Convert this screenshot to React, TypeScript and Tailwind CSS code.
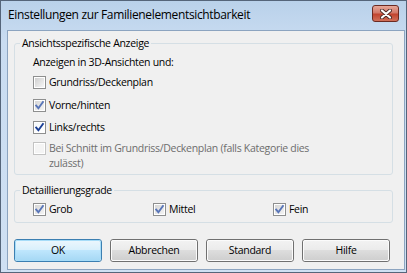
import React from "react";

type BoxState = "off" | "on" | "soft" | "disabled";

function CheckBox({ state }: { state: BoxState }) {
  const disabled = state === "disabled";
  const boxCls =
    state === "on"
      ? "bg-gradient-to-br from-[#f4f8fc] to-white"
      : state === "soft"
        ? "bg-gradient-to-br from-[#d6d6d6] to-[#f4f4f4]"
        : disabled
          ? "bg-[#f4f4f4]"
          : "bg-gradient-to-br from-[#cfcfcf] to-[#f6f6f6]";
  return (
    <span
      className={`flex h-[13px] w-[13px] shrink-0 items-center justify-center border ${
        disabled ? "border-[#c3c3c3]" : "border-[#8e8f8f]"
      } bg-white p-px`}
    >
      <span className={`relative flex h-full w-full items-center justify-center ${boxCls}`}>
        {(state === "on" || state === "soft") && (
          <svg width="11" height="11" viewBox="0 0 11 11" className="absolute -left-px -top-px">
            <path
              d="M2.2 5.6 L4.4 8.2 L8.9 2"
              fill="none"
              stroke={state === "on" ? "#1b3f95" : "#5875b8"}
              strokeWidth="1.9"
              strokeLinecap="square"
              strokeLinejoin="miter"
            />
          </svg>
        )}
      </span>
    </span>
  );
}

function CheckRow({ state, label, className = "" }: { state: BoxState; label: React.ReactNode; className?: string }) {
  return (
    <div className={`flex items-start gap-[3px] ${className}`}>
      <div className="mt-px">
        <CheckBox state={state} />
      </div>
      <span className={state === "disabled" ? "text-[#6d6d6d]" : "text-black"}>{label}</span>
    </div>
  );
}

function Button({ label, primary = false }: { label: string; primary?: boolean }) {
  return (
    <div
      className={`flex h-[23px] w-[88px] items-center justify-center rounded-[3px] border ${
        primary ? "border-[#3c7fb1]" : "border-[#707070]"
      }`}
    >
      <div
        className={`flex h-full w-full items-center justify-center rounded-[2px] border ${
          primary
            ? "border-[#a6dcf8] bg-[linear-gradient(#eaf6fd_0%,#d9f0fc_45%,#bee6fd_50%,#a7d9f5_100%)]"
            : "border-[#fbfbfb] bg-[linear-gradient(#f2f2f2_0%,#ebebeb_45%,#dddddd_50%,#cfcfcf_100%)]"
        }`}
      >
        {label}
      </div>
    </div>
  );
}

export default function App() {
  return (
    <div
      className="h-[273px] w-[407px] overflow-hidden bg-[#c7daf0] text-[10.5px] leading-[15px] tracking-[-0.3px] text-black"
      style={{ fontFamily: '"Segoe UI", "Open Sans", sans-serif' }}
    >
      <div className="flex h-full w-full flex-col border border-[#55657a] bg-[linear-gradient(#b9d1ea,#c9dcf1_40px,#cfe0f3)]">
        {/* Title bar */}
        <div className="flex h-[29px] shrink-0 items-start">
          <span className="ml-[7px] mt-[6px] text-[12px] tracking-[-0.35px] text-black">
            Einstellungen zur Familienelementsichtbarkeit
          </span>
          <div className="ml-auto mr-[7px] mt-[4px] flex h-[17px] w-[27px] items-center justify-center rounded-[3px] border border-[#6b2a22] bg-[linear-gradient(#e7a899_0%,#d27869_45%,#c1442f_55%,#d0705a_100%)]">
            <svg width="12" height="10" viewBox="0 0 12 10">
              <path d="M2 1.5 L10 8.5 M10 1.5 L2 8.5" stroke="#4a2a26" strokeWidth="4" strokeLinecap="round" />
              <path d="M2 1.5 L10 8.5 M10 1.5 L2 8.5" stroke="#ffffff" strokeWidth="2.2" strokeLinecap="round" />
            </svg>
          </div>
        </div>

        {/* Client area */}
        <div className="mb-[2px] ml-[6px] mr-px flex-1 border border-[#8ca4c0] bg-[#f0f0f0]">
          <fieldset className="ml-[6px] mr-[11px] mt-[5px] rounded-[3px] border border-[#d5dfe5] pb-[3px]">
            <legend className="ml-[5px] px-[2px] leading-[15px]">Ansichtsspezifische Anzeige</legend>
            <div className="pl-[18px]">
              <div className="mt-[4px]">Anzeigen in 3D-Ansichten und:</div>
              <CheckRow className="mt-[5px]" state="off" label="Grundriss/Deckenplan" />
              <CheckRow className="mt-[8px]" state="soft" label="Vorne/hinten" />
              <CheckRow className="mt-[7px]" state="on" label="Links/rechts" />
              <CheckRow
                className="mt-[6px]"
                state="disabled"
                label={
                  <>
                    Bei Schnitt im Grundriss/Deckenplan (falls Kategorie dies
                    <br />
                    zulässt)
                  </>
                }
              />
            </div>
          </fieldset>

          <fieldset className="ml-[6px] mr-[11px] mt-[8px] rounded-[3px] border border-[#d5dfe5] pb-[5px]">
            <legend className="ml-[5px] px-[2px] leading-[15px]">Detaillierungsgrade</legend>
            <div className="mt-[4px] grid grid-cols-[120px_120px_1fr] pl-[18px]">
              <CheckRow state="soft" label="Grob" />
              <CheckRow state="soft" label="Mittel" />
              <CheckRow state="soft" label="Fein" />
            </div>
          </fieldset>

          <div className="ml-[6px] mt-[16px] flex gap-[8px]">
            <Button label="OK" primary />
            <Button label="Abbrechen" />
            <Button label="Standard" />
            <Button label="Hilfe" />
          </div>
        </div>
      </div>
    </div>
  );
}
